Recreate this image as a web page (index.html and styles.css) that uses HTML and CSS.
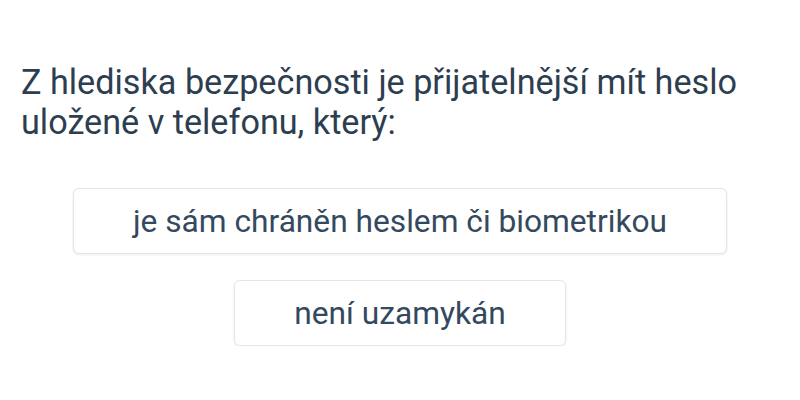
FILE: index.html
```html
<!DOCTYPE html>
<html lang="cs">
<head>
<meta charset="utf-8">
<link rel="stylesheet" href="styles.css">
</head>
<body>
<main class="question">
  <h1 class="question-title">Z hlediska bezpečnosti je přijatelnější mít heslo uložené v telefonu, který:</h1>
  <div class="answers">
    <button class="answer">je sám chráněn heslem či biometrikou</button>
    <button class="answer">není uzamykán</button>
  </div>
</main>
</body>
</html>
```

FILE: styles.css
```css
html, body {
  margin: 0;
  padding: 0;
  background: #ffffff;
}
body {
  font-family: Roboto, "Noto Sans", sans-serif;
  color: #2c3e50;
}
.question {
  padding: 62px 20px 0 21px;
}
.question-title {
  margin: 0;
  font-size: 34.2px;
  font-weight: 400;
  line-height: 40px;
  color: #2c3e50;
  max-width: 740px;
}
.answers {
  margin-top: 46px;
  display: flex;
  flex-direction: column;
  align-items: center;
  gap: 26px;
  margin-left: -21px;
  margin-right: -20px;
}
.answer {
  font-family: Roboto, "Noto Sans", sans-serif;
  font-size: 31.7px;
  color: #34495e;
  background: #ffffff;
  border: 1px solid #e6e6e6;
  border-radius: 6px;
  box-shadow: 0 1px 3px rgba(0,0,0,0.08);
  height: 66px;
  padding: 0 59px;
  cursor: pointer;
}
```
